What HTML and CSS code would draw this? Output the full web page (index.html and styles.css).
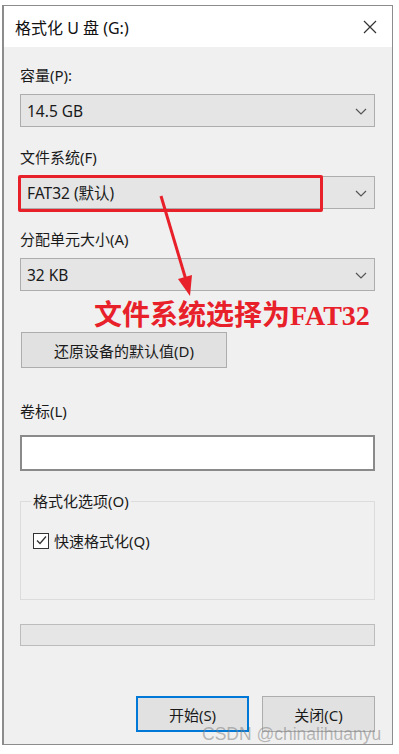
FILE: index.html
```html
<!DOCTYPE html>
<html lang="zh-CN">
<head>
<meta charset="utf-8">
<title>格式化 U 盘 (G:)</title>
<link rel="stylesheet" href="styles.css">
</head>
<body>
<div class="window">
  <div class="titlebar">
    <span class="title">格式化 U 盘 (G:)</span>
    <svg class="close" width="14" height="14" viewBox="0 0 14 14"><path d="M1 1L13 13M13 1L1 13" stroke="#333" stroke-width="1.2" fill="none"/></svg>
  </div>
  <div class="content">
    <div class="label l1">容量(P):</div>
    <div class="select"><span>14.5 GB</span><svg class="chev" width="12" height="7" viewBox="0 0 12 7"><path d="M1 1L6 6L11 1" stroke="#555" stroke-width="1.2" fill="none"/></svg></div>
    <div class="label">文件系统(F)</div>
    <div class="select"><span>FAT32 (默认)</span><svg class="chev" width="12" height="7" viewBox="0 0 12 7"><path d="M1 1L6 6L11 1" stroke="#555" stroke-width="1.2" fill="none"/></svg></div>
    <div class="label">分配单元大小(A)</div>
    <div class="select"><span>32 KB</span><svg class="chev" width="12" height="7" viewBox="0 0 12 7"><path d="M1 1L6 6L11 1" stroke="#555" stroke-width="1.2" fill="none"/></svg></div>
    <div class="annotation">文件系统选择为FAT32</div>
    <div class="btn restore">还原设备的默认值(D)</div>
    <div class="label l-vol">卷标(L)</div>
    <div class="input"></div>
    <fieldset class="group">
      <legend>格式化选项(O)</legend>
      <div class="check-row"><span class="checkbox"><svg width="13" height="13" viewBox="0 0 13 13"><path d="M2 6.5L5 9.5L11 2.5" stroke="#333" stroke-width="1.3" fill="none"/></svg></span><span>快速格式化(Q)</span></div>
    </fieldset>
    <div class="progress"></div>
    <div class="actions">
      <div class="btn primary">开始(S)</div>
      <div class="btn">关闭(C)</div>
    </div>
  </div>
</div>
<div class="redbox"></div>
<svg class="arrow" width="399" height="754" viewBox="0 0 399 754">
  <line x1="161" y1="196" x2="186" y2="280" stroke="#e8202a" stroke-width="3"/>
  <polygon points="190,296 192,275 178,279" fill="#e8202a"/>
</svg>
<div class="watermark">CSDN @chinalihuanyu</div>
</body>
</html>
```
FILE: styles.css
```css
html, body {
  margin: 0;
  padding: 0;
  background: #ffffff;
}
body {
  position: relative;
  width: 399px;
  height: 754px;
  font-family: "Segoe UI", "Noto Sans", "Noto Sans CJK SC", sans-serif;
  font-size: 15px;
  color: #1a1a1a;
}
.window {
  margin: 5px 0 0 2px;
  width: 388px;
  height: 738px;
  border: 1px solid #8c8c8c;
  border-left: 2px solid #8c8c8c;
  background: #f0f0f0;
  display: flex;
  flex-direction: column;
}
.titlebar {
  height: 41px;
  background: #ffffff;
  display: flex;
  align-items: center;
  justify-content: space-between;
  padding: 0 15px 0 11px;
  flex: none;
}
.title {
  font-size: 16px;
  color: #111;
}
.close {
  margin-top: 1px;
}
.content {
  display: flex;
  flex-direction: column;
  padding: 0 17px 0 16px;
}
.label {
  line-height: 20px;
  height: 20px;
  margin-top: 20px;
  margin-bottom: 9px;
}
.l1 {
  margin-top: 18px;
}
.select {
  height: 31px;
  border: 1px solid #adadad;
  background: #e5e5e5;
  display: flex;
  align-items: center;
  justify-content: space-between;
  padding: 0 7px 0 6px;
  font-size: 15.5px;
}
.chev {
  margin-top: 1px;
}
.annotation {
  margin-top: 9px;
  height: 32px;
  line-height: 32px;
  padding-left: 74px;
  font-family: "Liberation Serif", "Noto Sans CJK SC", serif;
  font-weight: bold;
  font-size: 28px;
  color: #e8202a;
  white-space: nowrap;
}
.btn {
  height: 34px;
  border: 1px solid #adadad;
  background: #e1e1e1;
  display: flex;
  align-items: center;
  justify-content: center;
}
.restore {
  width: 204px;
  margin-top: 0;
  margin-left: 1px;
}
.l-vol {
  margin-top: 33px;
  margin-bottom: 14px;
}
.input {
  height: 32px;
  border: 2px solid #8a8a8a;
  background: #ffffff;
}
.group {
  margin: 20px 0 0 0;
  padding: 0 12px;
  height: 109px;
  border: 1px solid #dcdcdc;
  box-sizing: border-box;
  min-width: 0;
}
.group legend {
  padding: 0 2px;
  margin-left: -2px;
  line-height: 20px;
}
.check-row {
  display: flex;
  align-items: center;
  gap: 5px;
  margin-top: 19px;
}
.checkbox {
  width: 14px;
  height: 14px;
  border: 1px solid #333;
  background: #ffffff;
  display: flex;
  align-items: center;
  justify-content: center;
}
.progress {
  margin-top: 24px;
  height: 20px;
  border: 1px solid #bcbcbc;
  background: #e6e6e6;
}
.actions {
  display: flex;
  justify-content: flex-end;
  gap: 13px;
  margin-top: 50px;
}
.actions .btn {
  width: 111px;
}
.actions .primary {
  width: 109px;
  height: 32px;
  border: 2px solid #0078d7;
}
.redbox {
  position: absolute;
  left: 18px;
  top: 175px;
  width: 299px;
  height: 31px;
  border: 3px solid #e8202a;
  border-radius: 2px;
}
.arrow {
  position: absolute;
  left: 0;
  top: 0;
  pointer-events: none;
}
.watermark {
  position: absolute;
  left: 202px;
  top: 723px;
  font-family: "Liberation Sans", Arial, sans-serif;
  font-size: 17.5px;
  line-height: 22px;
  color: rgba(130, 130, 130, 0.55);
  white-space: nowrap;
}
```
